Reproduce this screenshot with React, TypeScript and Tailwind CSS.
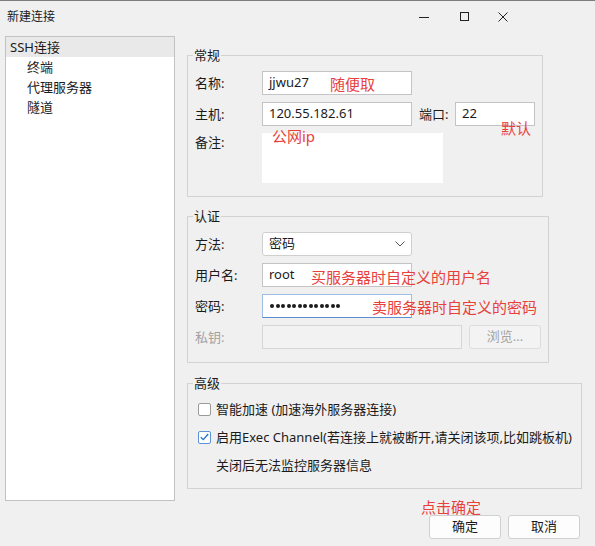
import React from "react"

const red = "absolute whitespace-nowrap text-[15px] leading-[18px] text-[#e8413c]"

function Input({ w, children, className = "" }: { w: string; children?: React.ReactNode; className?: string }) {
  return (
    <div className={`relative flex h-[24px] items-center border bg-white pl-[6px] ${w} ${className || "border-[#c4c4c4]"}`}>
      {children}
    </div>
  )
}

function Label({ children, muted }: { children: React.ReactNode; muted?: boolean }) {
  return <span className={`w-[67px] shrink-0 leading-[16px] ${muted ? "text-[#a3a3a3]" : ""}`}>{children}</span>
}

function Group({ title, w, className, children }: { title: string; w: string; className: string; children: React.ReactNode }) {
  return (
    <div className={`relative border border-[#d3d3d3] ${w} ${className}`}>
      <span className="absolute left-[5px] top-[-9px] bg-[#f0f0f0] px-[1px] leading-[16px]">{title}</span>
      {children}
    </div>
  )
}

function Check({ on }: { on?: boolean }) {
  return (
    <span className={`flex h-[13px] w-[13px] shrink-0 items-center justify-center rounded-[2px] border bg-white ${on ? "border-[#5b93d6]" : "border-[#9a9a9a]"}`}>
      {on && (
        <svg width="9" height="8" viewBox="0 0 9 8" fill="none">
          <path d="M0.8 4.2 L3.3 6.6 L8.2 1" stroke="#1f6fcf" strokeWidth="1.3" />
        </svg>
      )}
    </span>
  )
}

export default function App() {
  return (
    <div className="h-[546px] w-[595px] overflow-hidden border-t border-[#7c7c7c] bg-[#f0f0f0] font-['Noto_Sans','Noto_Sans_CJK_SC',sans-serif] text-[13px] text-[#1b1b1b]">
      {/* title bar */}
      <div className="flex h-[35px] items-center pb-[4px]">
        <span className="ml-[7px] text-[12px] leading-[16px]">新建连接</span>
        <div className="ml-auto flex items-center">
          <svg width="10" height="10" viewBox="0 0 10 10" className="mr-[30px]"><path d="M0 5.5 H10" stroke="#222" /></svg>
          <svg width="10" height="10" viewBox="0 0 10 10" className="mr-[29px]"><rect x="1.5" y="0.5" width="8" height="8" fill="none" stroke="#222" /></svg>
          <svg width="10" height="10" viewBox="0 0 10 10" className="mr-[87px]"><path d="M0.5 0.5 L9.5 9.5 M9.5 0.5 L0.5 9.5" stroke="#222" /></svg>
        </div>
      </div>

      <div className="flex">
        {/* left tree */}
        <div className="ml-[5px] h-[465px] w-[170px] border border-[#c2c2c2] bg-white">
          <div className="flex h-[20px] items-center bg-[#e9e9e9] pl-[4px] leading-[16px]">SSH连接</div>
          <div className="mt-[1px] flex h-[20px] items-center pl-[21px]">终端</div>
          <div className="flex h-[20px] items-center pl-[21px]">代理服务器</div>
          <div className="flex h-[20px] items-center pl-[21px]">隧道</div>
        </div>

        {/* right side */}
        <div className="ml-[12px] flex flex-1 flex-col pt-[19px]">
          <Group title="常规" w="w-[356px]" className="flex flex-col gap-[7px] pb-[13px] pl-[7px] pt-[15px]">
            <div className="flex h-[24px] items-center">
              <Label>名称:</Label>
              <Input w="w-[150px]">
                jjwu27
                <span className={`${red} left-[67px] top-[3px]`}>随便取</span>
              </Input>
            </div>
            <div className="flex h-[24px] items-center">
              <Label>主机:</Label>
              <Input w="w-[150px]">120.55.182.61</Input>
              <span className="ml-[7px] w-[36px] leading-[16px]">端口:</span>
              <Input w="w-[80px]">
                22
                <span className={`${red} left-[45px] top-[16px]`}>默认</span>
              </Input>
            </div>
            <div className="flex h-[50px] items-start">
              <span className="w-[67px] shrink-0 leading-[18px]">备注:</span>
              <div className="relative h-[50px] w-[181px] bg-white">
                <span className={`${red} left-[10px] top-[-6px]`}>公网ip</span>
              </div>
            </div>
          </Group>

          <Group title="认证" w="w-[362px]" className="mt-[19px] flex flex-col gap-[7px] pb-[13px] pl-[7px] pt-[15px]">
            <div className="flex h-[24px] items-center">
              <Label>方法:</Label>
              <div className="flex h-[24px] w-[150px] items-center rounded-[3px] border border-[#cfcfcf] bg-white pl-[6px] pr-[6px]">
                密码
                <svg width="10" height="6" viewBox="0 0 10 6" className="ml-auto"><path d="M0.5 0.5 L5 5 L9.5 0.5" fill="none" stroke="#555" /></svg>
              </div>
            </div>
            <div className="flex h-[24px] items-center">
              <Label>用户名:</Label>
              <Input w="w-[150px]">
                root
                <span className={`${red} left-[48px] top-[4px]`}>买服务器时自定义的用户名</span>
              </Input>
            </div>
            <div className="flex h-[24px] items-center">
              <Label>密码:</Label>
              <Input w="w-[150px]" className="border-[#9cbde6] border-b-[#5b8fd0]">
                <div className="flex gap-[1.5px] pl-[1px]">
                  {Array.from({ length: 13 }).map((_, i) => (
                    <span key={i} className="h-[4px] w-[4px] rounded-full bg-[#1b1b1b]" />
                  ))}
                </div>
                <span className={`${red} left-[109px] top-[3px]`}>卖服务器时自定义的密码</span>
              </Input>
            </div>
            <div className="flex h-[24px] items-center">
              <Label muted>私钥:</Label>
              <div className="h-[24px] w-[200px] border border-[#d6d6d6] bg-[#f2f2f2]" />
              <div className="ml-[7px] flex h-[24px] w-[72px] items-center justify-center rounded-[3px] border border-[#dcdcdc] bg-[#f3f3f3] text-[#a3a3a3]">浏览...</div>
            </div>
          </Group>

          <Group title="高级" w="w-[395px]" className="mt-[20px] flex flex-col pb-[9px] pl-[10px] pt-[11px]">
            <div className="flex h-[28px] items-center gap-[5px]">
              <Check />
              <span className="leading-[16px]">智能加速 (加速海外服务器连接)</span>
            </div>
            <div className="flex h-[28px] items-center gap-[5px]">
              <Check on />
              <span className="whitespace-nowrap leading-[16px]">启用Exec Channel(若连接上就被断开,请关闭该项,比如跳板机)</span>
            </div>
            <div className="flex h-[28px] items-center pl-[18px]">
              <span className="leading-[16px]">关闭后无法监控服务器信息</span>
            </div>
          </Group>

          <div className="ml-[234px] mt-[10px] text-[15px] leading-[16px] text-[#e8413c]">点击确定</div>
          <div className="flex gap-[7px] pl-[242px]">
            <div className="flex h-[24px] w-[72px] items-center justify-center rounded-[3px] border border-[#d0d0d0] bg-[#fdfdfd]">确定</div>
            <div className="flex h-[24px] w-[72px] items-center justify-center rounded-[3px] border border-[#d0d0d0] bg-[#fdfdfd]">取消</div>
          </div>
        </div>
      </div>
    </div>
  )
}
